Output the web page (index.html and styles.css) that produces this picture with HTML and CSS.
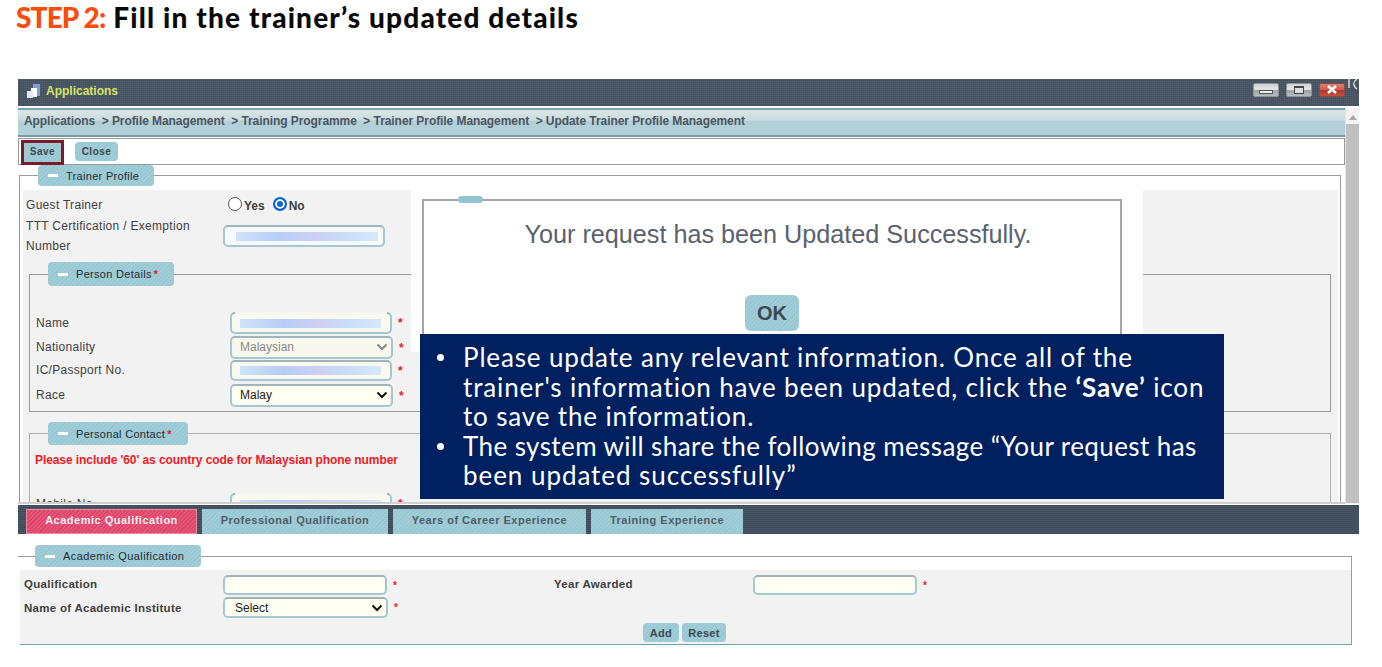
FILE: index.html
```html
<!DOCTYPE html>
<html lang="en">
<head>
<meta charset="utf-8">
<title>Step 2</title>
<link rel="stylesheet" href="styles.css">
</head>
<body>
<div class="page">
  <h1 class="heading"><span class="step">STEP 2:</span> Fill in the trainer’s updated details</h1>

  <div class="window">
    <div class="titlebar">
      <svg class="app-icon" width="16" height="16" viewBox="0 0 16 16"><rect x="7" y="1" width="7" height="12" fill="#7f9fd0"/><rect x="5" y="5" width="6" height="9" fill="#fff"/><rect x="1" y="8" width="6" height="7" fill="#e4e8ee"/></svg>
      <span class="app-name">Applications</span>
      <div class="win-btns">
        <span class="win-btn"><span class="glyph-min"></span></span>
        <span class="win-btn"><span class="glyph-max"></span></span>
        <span class="win-btn win-close"><svg width="12" height="9" viewBox="0 0 12 9"><path d="M2 1l8 7M10 1L2 8" stroke="#fff" stroke-width="2.400"/></svg></span>
      </div>
      <svg class="corner-mark" width="12" height="12" viewBox="0 0 12 12"><path d="M2 0v9M10 0Q6 3 7 6t3 4" fill="none" stroke="#d5d8dc" stroke-width="1.500"/></svg>
    </div>

    <div class="shell">
      <div class="main">
        <div class="crumbs">Applications &nbsp;&gt; Profile Management &nbsp;&gt; Training Programme &nbsp;&gt; Trainer Profile Management &nbsp;&gt; Update Trainer Profile Management</div>
        <div class="toolbar">
          <span class="save-mark"><button class="btn btn-save">Save</button></span>
          <button class="btn btn-close">Close</button>
        </div>
        <div class="content">
          <fieldset class="box box-trainer">
            <legend class="tag tag-trainer"><i class="minus"></i>Trainer Profile</legend>
            <div class="grey">
              <div class="row row-guest">
                <span class="lab lab-top">Guest Trainer</span>
                <span class="radio"></span><span class="radio-text">Yes</span>
                <span class="radio radio-on"></span><span class="radio-text">No</span>
              </div>
              <div class="row row-ttt">
                <span class="lab lab-top lab-wrap">TTT Certification / Exemption Number</span>
                <span class="field field-ttt"><i class="blur"></i></span>
              </div>

              <fieldset class="box box-person">
                <legend class="tag tag-person"><i class="minus"></i>Person Details<b class="req">*</b></legend>
                <div class="row r22"><span class="lab lab-in">Name</span><span class="field field-in field-cream field-patched"><i class="blur"></i></span><b class="req req-side">*</b></div>
                <div class="row r23"><span class="lab lab-in">Nationality</span><span class="field field-in field-sel field-off">Malaysian<svg class="chev" width="12" height="8" viewBox="0 0 12 8"><path d="M1.500 1.500L6 6l4.500-4.500" fill="none" stroke="#8a8a8a" stroke-width="2"/></svg></span><b class="req req-side">*</b></div>
                <div class="row r21"><span class="lab lab-in">IC/Passport No.</span><span class="field field-in field-cream"><i class="blur"></i></span><b class="req req-side">*</b></div>
                <div class="row r23"><span class="lab lab-in">Race</span><span class="field field-in field-sel">Malay<svg class="chev" width="12" height="8" viewBox="0 0 12 8"><path d="M1.500 1.500L6 6l4.500-4.500" fill="none" stroke="#111" stroke-width="2"/></svg></span><b class="req req-side">*</b></div>
              </fieldset>

              <fieldset class="box box-contact">
                <legend class="tag tag-contact"><i class="minus"></i>Personal Contact<b class="req"> *</b></legend>
                <p class="note">Please include '60' as country code for Malaysian phone number</p>
                <div class="row r22"><span class="lab lab-in">Mobile No.</span><span class="field field-in field-cream field-patched"><i class="blur"></i></span><b class="req req-side">*</b></div>
              </fieldset>
            </div>
          </fieldset>
        </div>
      </div>
      <div class="scrollbar"><span class="scroll-up"></span><span class="scroll-thumb"></span></div>
    </div>

    <div class="tabs">
      <span class="tab tab-active t-aca">Academic Qualification</span>
      <span class="tab t-pro">Professional Qualification</span>
      <span class="tab t-yrs">Years of Career Experience</span>
      <span class="tab t-trn">Training Experience</span>
    </div>

    <fieldset class="box box-academic">
      <legend class="tag tag-academic"><i class="minus"></i>Academic Qualification</legend>
      <div class="grey grey-aca">
        <div class="row aca-row1">
          <span class="lab lab-aca">Qualification</span>
          <span class="field field-aca"></span><b class="req req-aca">*</b>
          <span class="lab lab-year">Year Awarded</span>
          <span class="field field-aca"></span><b class="req req-aca">*</b>
        </div>
        <div class="row aca-row2">
          <span class="lab lab-aca">Name of Academic Institute</span>
          <span class="field field-aca field-sel">Select<svg class="chev" width="12" height="8" viewBox="0 0 12 8"><path d="M1.500 1.500L6 6l4.500-4.500" fill="none" stroke="#111" stroke-width="2"/></svg></span><b class="req req-aca">*</b>
        </div>
        <div class="aca-actions">
          <button class="btn btn-add">Add</button>
          <button class="btn btn-reset">Reset</button>
        </div>
      </div>
    </fieldset>
  </div>

  <div class="blank-cover">
    <div class="dialog">
      <span class="dialog-tag"></span>
      <p class="dialog-msg">Your request has been Updated Successfully.</p>
      <button class="btn dialog-ok">OK</button>
    </div>
  </div>

  <div class="callout">
    <ul class="callout-list">
      <li>Please update any relevant information. Once all of the trainer's information have been updated, click the <b>‘Save’</b> icon to save the information.</li>
      <li><span class="line-tight">The system will share the following message “Your request has</span> <span class="line-wide">been updated successfully”</span></li>
    </ul>
  </div>
</div>
</body>
</html>
```
FILE: styles.css
```css
* { box-sizing: border-box; }
html, body { margin: 0; padding: 0; background: #fff; }
body { font-family: "Liberation Sans", Arial, sans-serif; font-size: 12px; color: #404040; }
.page { position: relative; width: 1382px; height: 667px; overflow: hidden; }

.heading { margin: 0; height: 79px; padding: 0 0 0 16px; font-family: "Lato", sans-serif; font-size: 28px; line-height: 34px; font-weight: 900; color: #0a0a0a; letter-spacing: 1.150px; }
.step { color: #fc4c0c; letter-spacing: -.85px; }

.window { margin-left: 18px; width: 1341px; }

.titlebar { position: relative; height: 27px; display: flex; align-items: center; padding: 0 14px 0 8px; background-color: #3f4c5b; background-image: linear-gradient(#4d5967 1px, transparent 1px), linear-gradient(90deg, #4d5967 1px, transparent 1px); background-size: 2px 2px; }
.app-icon { flex: none; margin-top: -4px; }
.app-name { margin-left: 4px; margin-top: -4px; font-weight: bold; font-size: 12px; color: #d8e46a; }
.win-btns { margin-left: auto; display: flex; gap: 7px; margin-top: -6px; }
.win-btn { width: 26px; height: 14px; border-radius: 2px; display: flex; align-items: center; justify-content: center; background: linear-gradient(#cfd3d3, #e4e6e6 45%, #9da3a3 55%, #b9bdbd); border: 1px solid #8e9499; }
.win-close { background: linear-gradient(#d98070, #d0604f 45%, #b5382a 55%, #c4503f); border-color: #8e4a42; }
.glyph-min { display: block; width: 14px; height: 4px; margin-top: 4px; border: 1px solid #555; background: #eee; }
.glyph-max { display: block; width: 10px; height: 8px; border: 1px solid #444; border-top-width: 2px; background: #ddd; }
.corner-mark { position: absolute; right: 0; top: 0; }

.shell { display: flex; margin-top: 2px; height: 396px; }
.main { width: 1327px; flex: none; display: flex; flex-direction: column; }
.crumbs { height: 29px; padding: 0 0 0 6px; line-height: 23px; font-weight: bold; font-size: 12px; letter-spacing: -.07px; color: #4b5560; white-space: nowrap; border-top: 2px solid #7ba3ad; border-bottom: 2px solid #7d97a0; background: linear-gradient(#dbe5e6, #c9dcdf 40%, #b3d0d8 45%, #b3d0d8); }
.toolbar { margin-top: 1px; height: 27px; flex: none; display: flex; align-items: center; padding-left: 2px; border: 1px solid #9a9a9a; background: #fff; }
.save-mark { display: flex; width: 43px; height: 25px; margin-top: 1px; border: 3px solid #7a1a2a; }
.btn { border: 0; padding: 0; font-family: "Liberation Sans", Arial, sans-serif; font-weight: bold; color: #3c4852; cursor: pointer; border-radius: 4px; background: repeating-linear-gradient(135deg, #97c7d3 0 1.500px, #a3ced8 1.500px 3px); }
.btn-save { width: 37px; height: 19px; padding-bottom: 1px; font-size: 10px; letter-spacing: .5px; border-radius: 0; }
.btn-close { width: 43px; height: 19px; margin-left: 11px; font-size: 10px; letter-spacing: .5px; }

.content { flex: 1; min-height: 0; overflow: hidden; border-bottom: 2px solid #cfcfcf; }

.box { margin: 0; min-width: 0; border: 1px solid #9a9a9a; }
.box-trainer { margin-left: 1px; width: 1322px; padding: 0 2px 0 3px; height: 400px; }
.tag { display: flex; align-items: center; padding: 0 0 0 10px; border-radius: 4px; font-size: 11px; color: #1f2a33; letter-spacing: .3px; background: repeating-linear-gradient(135deg, #97c7d3 0 1.500px, #a3ced8 1.500px 3px); }
.minus { display: block; width: 10px; height: 3px; margin-right: 8px; background: #fff; flex: none; }
.tag-trainer { width: 116px; height: 21px; margin-left: 15px; }
.grey { background: #f2f2f2; }
.box-trainer > .grey { margin-top: 4px; padding-top: 5px; height: 400px; }

.row { display: flex; align-items: center; }
.lab { flex: none; white-space: nowrap; letter-spacing: .3px; }
.lab-top { width: 200px; padding-left: 3px; }
.row-guest { height: 20px; }
.radio { width: 14px; height: 14px; margin-left: 5px; margin-top: -2px; border-radius: 50%; border: 1px solid #555; background: #fff; flex: none; }
.radio-on { margin-left: 8px; border: 2px solid #0a63d8; box-shadow: inset 0 0 0 2px #fff; background: #0a63d8; }
.radio-text { margin-left: 2px; margin-top: 2px; font-weight: bold; font-size: 12px; }
.row-ttt { height: 40px; margin-top: 1px; align-items: flex-start; }
.lab-wrap { white-space: normal; line-height: 20px; }

.field { display: flex; align-items: center; flex: none; position: relative; border: 2px solid #a5c8d0; border-top-color: #9fb5ba; border-radius: 5px; background: #fffff3; font-size: 12px; color: #222; }
.field-ttt { width: 162px; height: 22px; margin-top: 9px; background: #f8fbfc; padding-left: 11px; }
.blur { display: block; height: 9px; flex: 1; margin-right: 5px; background: linear-gradient(90deg, #cfe3fb, #b6cdf6 30%, #cdd0f4 55%, #c8dcf6 75%, #d5e9fc); }
.field-patched::after { content: ""; position: absolute; left: 3px; right: 3px; top: -2px; height: 3px; background: #f6f6f2; }

.box-person { margin: 6px 7px 0 6px; padding: 2px 0 5px; height: 150px; }
.box-person .row + .row { margin-top: 2px; }
.box-person .row.r21 { margin-top: 1px; }
.box-person .row.r21 + .row { margin-top: 3px; }
.tag-person { width: 126px; height: 24px; margin-left: 18px; }
.tag-contact { width: 140px; height: 23px; margin-left: 18px; }
.req { color: #e8202a; font-weight: bold; }
.tag .req { margin-left: 2px; }
.box-person > .row:first-of-type { margin-top: 24px; }
.r22 { height: 22px; }
.r23 { height: 23px; }
.r21 { height: 21px; }
.r23 .lab, .r21 .lab { margin-top: -2px; }
.lab-in { width: 200px; padding-left: 6px; }
.field-in { width: 162px; height: 100%; padding-left: 8px; }
.field-in .blur { margin-right: 9px; }
.field-cream { background: #f9f9f0; }
.req-side { margin-left: 6px; }
.field-sel { justify-content: space-between; padding-right: 3px; padding-bottom: 2px; width: 163px; }
.field-off { color: #8a8a8a; background: #f8f8ef; }
.chev { flex: none; }

.box-contact { margin: 10px 7px 0 6px; padding: 7px 0 0; height: 200px; border-color: #b0b0b0; }
.note { margin: 0 0 25px; padding-left: 5px; font-size: 12px; line-height: 16px; font-weight: bold; letter-spacing: -.08px; color: #ee1c25; }

.scrollbar { flex: 1; display: flex; flex-direction: column; align-items: center; background: #f3f3f3; border-left: 1px solid #e5e5e5; }
.scroll-up { display: block; margin-top: 7px; width: 0; height: 0; border: 4px solid transparent; border-top: 0; border-bottom: 5px solid #a8a8a8; }
.scroll-thumb { display: block; flex: 1; width: 100%; margin-top: 4px; margin-bottom: 1px; background: #c0c0c0; }

.tabs { height: 30px; padding: 4px 0 0 8px; display: flex; gap: 5px; border-top: 1px solid #fff; background: repeating-linear-gradient(0deg, #3d4a59 0 1px, #4b5766 1px 2px); }
.tab { display: flex; align-items: center; justify-content: center; height: 25px; padding-bottom: 3px; font-weight: bold; font-size: 11px; letter-spacing: .5px; color: #4f5c68; background: repeating-linear-gradient(135deg, #97c7d3 0 1.500px, #a3ced8 1.500px 3px); }
.tab-active { color: #fbeef0; background: repeating-linear-gradient(135deg, #de4568 0 1.500px, #e5577a 1.500px 3px); border: 1px solid #ee8aa0; }
.t-aca { width: 171px; }
.t-pro { width: 186px; }
.t-yrs { width: 193px; }
.t-trn { width: 152px; }

.box-academic { width: 1334px; margin-top: 11px; padding: 0 0 0 2px; border-width: 1px 1px 0 0; height: 100px; }
.tag-academic { width: 166px; height: 22px; margin-left: 15px; letter-spacing: .43px; }
.grey-aca { margin-top: 3px; height: 75px; padding-top: 5px; border-bottom: 1px solid #6fa3b1; }
.lab-aca { width: 203px; padding-left: 4px; font-weight: bold; font-size: 11.500px; letter-spacing: .28px; }
.lab-year { width: 199px; margin-left: 160px; font-weight: bold; font-size: 11.500px; letter-spacing: .28px; }
.aca-row1 .lab { margin-top: -2px; }
.field-aca { width: 164px; height: 20px; padding-left: 10px; }
.field-aca.field-sel { width: 165px; height: 21px; padding-bottom: 0; }
.req-aca { margin-left: 6px; width: 1px; font-size: 10px; }
.aca-row1 { height: 20px; }
.aca-row2 { height: 21px; margin-top: 2px; }
.aca-actions { display: flex; gap: 3px; padding-left: 623px; margin-top: 5px; }
.btn-add { width: 36px; height: 19px; font-size: 11px; letter-spacing: .3px; }
.btn-reset { width: 44px; height: 19px; font-size: 11px; letter-spacing: .3px; }

.blank-cover { position: absolute; left: 411px; top: 190px; width: 732px; height: 162px; background: #fff; }
.dialog { position: relative; margin: 9px 0 0 11px; width: 700px; height: 150px; border: 2px solid #a6a6a6; display: flex; flex-direction: column; align-items: center; }
.dialog-tag { position: absolute; left: 34px; top: -5px; width: 25px; height: 7px; border-radius: 4px; background: #92c4d0; }
.dialog-msg { margin: 18px 0 0 12px; font-size: 25.200px; line-height: 30px; color: #59626d; white-space: nowrap; }
.dialog-ok { margin: 46px 0 0; width: 54px; height: 36px; border-radius: 6px; font-size: 20px; }

.callout { position: absolute; left: 420px; top: 334px; width: 804px; height: 165px; background: #00205f; color: #fff; font-family: "Lato", sans-serif; font-size: 26px; line-height: 29.500px; padding: 9px 16px 0 0; }
.callout-list { margin: 0; padding: 0 0 0 43px; letter-spacing: .85px; list-style: none; }
.callout-list li { position: relative; }
.callout-list li::before { content: ""; position: absolute; left: -26px; top: 11px; width: 7px; height: 7px; border-radius: 50%; background: #fff; }
.line-tight { display: block; letter-spacing: .41px; white-space: nowrap; }
.line-wide { display: block; letter-spacing: .95px; white-space: nowrap; }
```
